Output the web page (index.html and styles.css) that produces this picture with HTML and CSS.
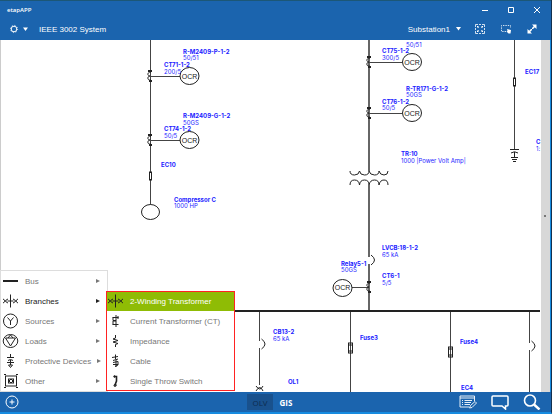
FILE: index.html
```html
<!DOCTYPE html>
<html lang="en">
<head>
<meta charset="utf-8">
<title>etapAPP</title>
<link rel="stylesheet" href="styles.css">
</head>
<body>
<div class="app">
  <header class="header">
    <div class="titlebar">
      <span class="app-name">etapAPP</span>
      <div class="window-buttons">
        <button class="icon-button" aria-label="Minimize"><svg width="8" height="8" viewBox="0 0 8 8"><path d="M1 4.500H7"/></svg></button>
        <button class="icon-button" aria-label="Maximize"><svg width="8" height="8" viewBox="0 0 8 8"><path d="M1.500 1.500H6.500V6.500H1.500Z"/></svg></button>
        <button class="icon-button" aria-label="Close"><svg width="8" height="8" viewBox="0 0 8 8"><path d="M1 1L7 7M7 1L1 7"/></svg></button>
      </div>
    </div>
    <div class="toolbar">
      <button class="icon-button settings" aria-label="Settings">
        <svg width="18" height="10" viewBox="0 0 18 10"><circle cx="4" cy="5" r="2.8"/><circle cx="4" cy="5" r="3.6" stroke-dasharray="1 1.83" stroke-width=".9"/><path class="solid" d="M13 3.500H18L15.500 7Z"/></svg>
      </button>
      <span class="project">IEEE 3002 System</span>
      <button class="icon-button view-picker">Substation1 <svg width="5" height="4" viewBox="0 0 5 4"><path class="solid" d="M0 0H5L2.500 3.500Z"/></svg></button>
      <button class="icon-button" aria-label="Fit to window">
        <svg width="10" height="10" viewBox="0 0 10 10"><path stroke-width=".8" d="M.5 3V.5H3M7 .5H9.500V3M9.500 7V9.500H7M3 9.500H.5V7M4 .5H6M4 9.500H6M.5 4V6M9.500 4V6M2 2L3.800 3.800M8 2L6.200 3.800M2 8L3.800 6.200M8 8L6.200 6.200"/><path class="solid" d="M2 2H4L2 4ZM8 2V4L6 2ZM2 8V6L4 8ZM8 8H6L8 6Z"/></svg>
      </button>
      <button class="icon-button" aria-label="Select area">
        <svg width="10" height="10" viewBox="0 0 10 10"><path stroke-width=".8" stroke-dasharray="1.400 1" d="M5 7.500H.5V1.500H9.500V4"/><path class="solid" d="M6 5L10 6L9.500 9.500H7.500L5.500 7.500L6.500 7Z"/></svg>
      </button>
      <button class="icon-button" aria-label="Full screen">
        <svg width="10" height="10" viewBox="0 0 10 10"><path stroke-width="1.600" d="M1.500 8.500L8.500 1.500"/><path class="solid" d="M5 .5H9.500V5ZM.5 5V9.500H5Z"/><path class="gap" d="M4 4L6 6"/></svg>
      </button>
    </div>
  </header>

  <main class="workspace">
    <svg class="diagram" role="img" aria-label="One-line diagram">
      <defs>
        <g id="ct"><path class="heavy" d="M-2 -5H2M-1 5H2"/><path d="M1 -4C-3 -4 -3 0 0 0C-3 0 -3 5 1 4"/></g>
        <g id="fuse"><rect x="-2" y="-5" width="4" height="10"/><path d="M-2 -3H2M-2 3H2"/></g>
        <g id="link"><rect class="blank" x="-1" y="-4" width="2" height="8"/></g>
        <g id="breaker"><path class="erase" d="M0 -3V4"/><path d="M2 -5Q9 0 2 5"/></g>
      </defs>
      <g transform="translate(-1 -40)">
        <g class="wire">
          <path d="M150.500 40V205M150.500 76.500H180M150.500 140.500H180"/>
          <path class="feeder" d="M369 40V171M369 185V310"/>
          <path d="M369 62.500H402M369 113.500H402M352 287.500H369"/>
          <path d="M514.500 40V149M259.500 311V385M350.500 311V392M450.500 311V392M529.500 311V392"/>
        </g>
        <path class="bus" d="M106 311H540"/>
        <g class="symbol">
          <use href="#ct" x="150" y="76"/><use href="#ct" x="150" y="140"/>
          <use href="#ct" x="369" y="62"/><use href="#ct" x="369" y="113"/><use href="#ct" x="369" y="287"/>
          <use href="#link" x="150.500" y="176"/><use href="#link" x="514.500" y="82"/>
          <use href="#fuse" x="350.500" y="348"/><use href="#fuse" x="450.500" y="352"/>
          <use href="#breaker" x="369" y="260"/><use href="#breaker" x="259.500" y="344"/><use href="#breaker" x="529.500" y="346"/>
          <ellipse class="blank" cx="150.500" cy="212" rx="9" ry="7.500"/>
          <path d="M350 171Q350 175 354.500 175T359.500 171Q360 175 364.500 175T369 171Q370 175 374.500 175T379 171Q380 175 384 175T388 171M350 185Q350 180 354.500 180T359.500 185Q360 180 364.500 180T369 185Q370 180 374.500 180T379 185Q380 180 384 180T388 185"/>
          <path d="M510 149.500H519M511 153Q514.500 150.500 518 153"/>
          <path d="M514.500 152V157M511 157.500H518M512 159.500H517M513 161.500H516"/>
          <path d="M256 391Q260 384 263 391M256 386Q260 392 263 386"/>
          <ellipse class="blank" cx="189.500" cy="76" rx="9.500" ry="8.500"/><ellipse class="blank" cx="189.500" cy="140" rx="9.500" ry="8.500"/>
          <ellipse class="blank" cx="412" cy="62" rx="9.500" ry="8.500"/><ellipse class="blank" cx="412" cy="113" rx="9.500" ry="8.500"/>
          <ellipse class="blank" cx="342.500" cy="288" rx="9.500" ry="8.500"/>
        </g>
        <g class="relay">
          <text x="189.500" y="79">OCR</text><text x="189.500" y="143">OCR</text><text x="412" y="65">OCR</text><text x="412" y="116">OCR</text><text x="342.500" y="290">OCR</text>
        </g>
        <g class="name">
          <text x="183" y="54">R-M2409-P-1-2</text><text x="164" y="67">CT71-1-2</text>
          <text x="183" y="118">R-M2409-G-1-2</text><text x="164" y="131">CT74-1-2</text>
          <text x="161" y="167">EC10</text><text x="174" y="202">Compressor C</text>
          <text x="382" y="53">CT75-1-2</text><text x="406" y="91">R-TR171-G-1-2</text><text x="382" y="104">CT76-1-2</text>
          <text x="525" y="74">EC17</text><text x="401" y="156">TR:10</text><text x="536" y="144">C</text>
          <text x="382" y="250">LVCB:18-1-2</text><text x="341" y="266">Relay5-1</text><text x="382" y="278">CT6-1</text>
          <text x="273" y="334">CB13-2</text><text x="360" y="340">Fuse3</text><text x="460" y="344">Fuse4</text>
          <text x="288" y="384">OL1</text><text x="461" y="390">EC4</text>
        </g>
        <g class="rating">
          <text x="183" y="60">50/51</text><text x="164" y="74">200/5</text><text x="183" y="125">50GS</text><text x="164" y="138">50/5</text>
          <text x="174" y="208">1000 HP</text><text x="406" y="47">50/51</text><text x="382" y="60">300/5</text><text x="406" y="97">50GS</text><text x="382" y="110">50/5</text>
          <text x="401" y="163">1000 |Power Volt Amp|</text><text x="536" y="151">1:</text><text x="382" y="257">65 kA</text>
          <text x="341" y="272">50GS</text><text x="382" y="285">5/5</text><text x="273" y="341">65 kA</text>
        </g>
      </g>
    </svg>
    <aside class="side-handle"><span class="grip"></span></aside>

    <nav class="menu" aria-label="Elements">
      <button class="menu-item"><svg viewBox="0 0 18 16"><path stroke-width="2" d="M2 8H17"/></svg><span>Bus</span><i class="arrow"></i></button>
      <button class="menu-item open"><svg viewBox="0 0 18 16"><path d="M9.500 1.500V14.500M6.500 8H12.500M2 6Q6 8 2 10M7 6Q2 8 7 10M12 6Q17 8 12 10M17 6Q13 8 17 10"/></svg><span>Branches</span><i class="arrow"></i></button>
      <button class="menu-item"><svg viewBox="0 0 18 16"><circle cx="9.500" cy="8" r="7"/><path d="M6.500 4.500L9.500 8L12.500 4.500M9.500 8V12"/></svg><span>Sources</span><i class="arrow"></i></button>
      <button class="menu-item"><svg viewBox="0 0 18 16"><ellipse cx="9.500" cy="8" rx="7.300" ry="6.500"/><path d="M4.500 5H14.500L9.500 13ZM7 5L9.500 2L12 5"/></svg><span>Loads</span><i class="arrow"></i></button>
      <button class="menu-item"><svg viewBox="0 0 18 16"><path d="M9.500 1V4M6 4.500H13M7 7.500Q9.500 5.500 12 7.500M9.500 7V12M6 9.500H13M7.500 12L9.500 14.500L11.500 12Z"/></svg><span>Protective Devices</span><i class="arrow"></i></button>
      <button class="menu-item"><svg viewBox="0 0 18 16"><rect x="4.500" y="3" width="11" height="10"/><rect x="7.500" y="6" width="5" height="4" fill="currentColor"/><path d="M3 1.500H5M15 1.500H17M3 14.500H5M15 14.500H17"/><path class="cross" d="M8.500 6.500L11.500 9.500M11.500 6.500L8.500 9.500"/></svg><span>Other</span><i class="arrow"></i></button>
    </nav>
    <nav class="menu submenu" aria-label="Branches">
      <button class="menu-item selected"><svg viewBox="0 0 18 16"><path d="M9.500 1.500V14.500M6.500 8H12.500M2 6Q6 8 2 10M7 6Q2 8 7 10M12 6Q17 8 12 10M17 6Q13 8 17 10"/></svg><span>2-Winding Transformer</span></button>
      <button class="menu-item"><svg viewBox="0 0 18 16"><path d="M10 2V14M6.500 4.500H12.500M7 4.500V7.500H10M6.500 11.500H12.500M10 8H7V11.500M12 3V6"/></svg><span>Current Transformer (CT)</span></button>
      <button class="menu-item"><svg viewBox="0 0 18 16"><path d="M9.500 2V5L7 6L12 7.500L7 9L12 10.500L9.500 11.500V14"/></svg><span>Impedance</span></button>
      <button class="menu-item"><svg viewBox="0 0 18 16"><path d="M9.500 1.500V6M6 4.500L12 3.500M7 7.500L12 6M10 7V14M7 9.500L12 8.500V12L9 13.500M7 11.500H12"/></svg><span>Cable</span></button>
      <button class="menu-item"><svg viewBox="0 0 18 16"><path stroke-width="1.600" d="M8 3.500H10.500V8L9 12H10.500"/><circle cx="8.500" cy="3.500" r=".8"/><circle cx="9" cy="12.500" r="1"/></svg><span>Single Throw Switch</span></button>
    </nav>
  </main>

  <footer class="footer">
    <button class="icon-button" aria-label="Add element"><svg width="14" height="14" viewBox="0 0 14 14"><circle cx="7" cy="7" r="6"/><path d="M4.500 7H9.500M7 4.500V9.500"/></svg></button>
    <div class="modes"><button class="mode active">OLV</button><button class="mode">GIS</button></div>
    <div class="actions">
      <button class="icon-button" aria-label="Edit data"><svg width="18" height="16" viewBox="0 0 18 16"><path stroke-width=".9" d="M15.500 7V2H1V13H10M1 4H15.500M3 6.500H4M5.500 6.500H13M3 8.500H4M5.500 8.500H12M3 10.500H4M5.500 10.500H11M10.500 14L11.500 11.500L16 7.500L17.500 9L13 13.500Z"/></svg></button>
      <button class="icon-button" aria-label="Comments"><svg width="18" height="16" viewBox="0 0 18 16"><path stroke-width="1.500" d="M2 2H16Q17 2 17 3V11Q17 12 16 12H14.500V15L11 12H2Q1 12 1 11V3Q1 2 2 2Z"/></svg></button>
      <button class="icon-button" aria-label="Search"><svg width="18" height="16" viewBox="0 0 18 16"><circle cx="7" cy="6.500" r="5.500" stroke-width="1.600"/><path stroke-width="2.400" d="M11 10.500L16.500 15.500"/></svg></button>
    </div>
  </footer>
</div>
</body>
</html>
```
FILE: styles.css
```css
* { box-sizing: border-box; }

body {
  margin: 0;
  font-family: "Liberation Sans", Arial, sans-serif;
  font-size: 8px;
  color: #fff;
}

button {
  font: inherit;
  color: inherit;
  background: none;
  border: 0;
  padding: 0;
}

svg {
  display: block;
  flex-shrink: 0;
  fill: none;
  stroke: currentColor;
  stroke-width: 1;
}

.solid { fill: currentColor; stroke: none; }
.gap { stroke: #1b64ae; stroke-width: 1; }
.cross { stroke: #fff; stroke-width: 1; }

.app {
  display: flex;
  flex-direction: column;
  height: 100vh;
  border-right: 1px solid #12304e;
  border-bottom: 2px solid #168be0;
  background: #1b64ae;
}

.header {
  border-top: 1px solid #1c5777;
  background: #1b64ae;
}

.titlebar, .toolbar {
  display: flex;
  align-items: center;
}

.titlebar {
  height: 17px;
  justify-content: space-between;
  padding: 0 10px 0 7px;
}

.app-name {
  font-family: "Open Sans", sans-serif;
  font-size: 6px;
  font-weight: 600;
}

.window-buttons { display: flex; gap: 18px; }

.icon-button {
  display: flex;
  align-items: center;
}

.toolbar {
  height: 22px;
  gap: 16px;
  padding: 0 14px 0 10px;
}

.project { margin-right: auto; margin-left: -5px; }
.view-picker { gap: 6px; margin-right: -2px; }

.workspace {
  position: relative;
  display: flex;
  flex: 1;
  min-height: 0;
  border-left: 1px solid #ccc;
  border-right: 1px solid #168be0;
  background: #fff;
}

.diagram {
  flex: 1;
  min-width: 0;
  height: 100%;
  color: #222;
}

.wire { stroke: #444; }
.feeder { stroke: #666; stroke-width: 2; }
.bus { stroke: #222; stroke-width: 2; }
.heavy { stroke-width: 2; }
.erase { stroke: #fff; stroke-width: 3; }
.blank { fill: #fff; }

.diagram text {
  stroke: none;
  fill: #1c1cff;
  font-family: Inter, sans-serif;
  font-size: 6px;
}

.diagram .name text { font-weight: 700; }

.diagram .relay text {
  fill: #222;
  font-family: "Liberation Sans", Arial, sans-serif;
  font-size: 7px;
  text-anchor: middle;
}

.side-handle {
  display: flex;
  align-items: center;
  flex-shrink: 0;
  width: 9px;
  padding-left: 3px;
  background: #d8d8d8;
}

.grip { width: 2px; height: 2px; background: #777; }

.menu {
  position: absolute;
  left: 0;
  bottom: 1px;
  width: 106px;
  outline: 1px solid #ddd;
  background: #fff;
  color: #777;
}

.menu-item {
  display: flex;
  align-items: center;
  width: 100%;
  height: 20px;
  gap: 6px;
  white-space: nowrap;
}

.menu-item svg { width: 18px; height: 16px; color: #222; }
.open { color: #222; }

.arrow {
  margin-left: auto;
  margin-right: 7px;
  border: 2px solid transparent;
  border-left: 4px solid;
  border-right: 0;
}

.submenu {
  left: 105px;
  width: 129px;
  outline: 1px solid #f22;
  outline-offset: -1px;
}

.selected { background: #8fbc05; color: #fff; }

.footer {
  display: grid;
  grid-template-columns: 1fr auto 1fr;
  align-items: center;
  height: 20px;
  padding: 0 10px 0 5px;
}

.modes { display: flex; }

.mode {
  width: 26px;
  height: 16px;
  font-family: "Open Sans", sans-serif;
  font-weight: 700;
}

.active { background: #19518d; color: #0d2c50; font-weight: 400; }

.actions {
  display: flex;
  justify-content: flex-end;
  gap: 14px;
}
```
